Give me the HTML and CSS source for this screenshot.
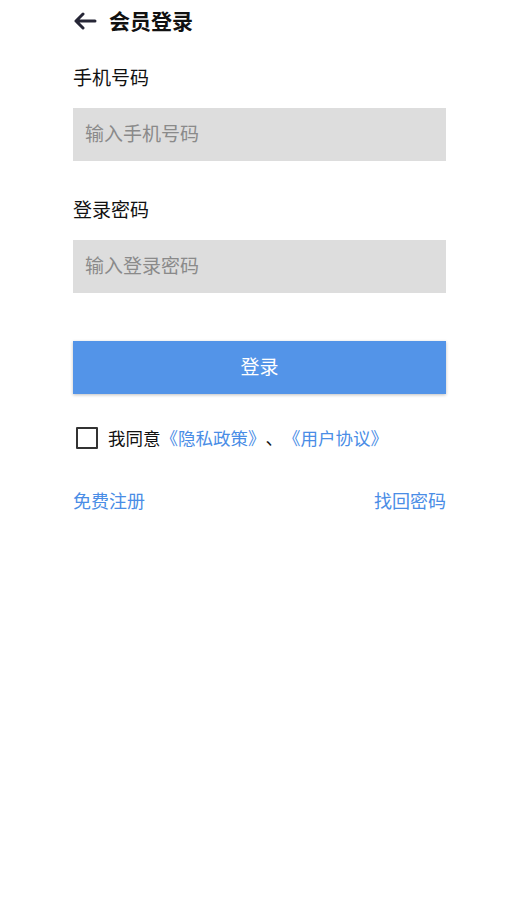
FILE: index.html
```html
<!DOCTYPE html>
<html lang="zh-CN">
  <head>
    <meta charset="UTF-8" />
    <meta name="viewport" content="width=device-width, initial-scale=1.0" />
    <title>会员登录</title>
    <link rel="stylesheet" href="styles.css">
  </head>
  <body>
    <div class="page">
      <div class="header">
        <svg class="back" width="24" height="18" viewBox="0 0 24 18">
          <path d="M22 9H3M10 2L3 9l7 7" fill="none" stroke="#262636" stroke-width="3" stroke-linecap="round" stroke-linejoin="round" />
        </svg>
        <h1>会员登录</h1>
      </div>

      <div class="field">
        <label>手机号码</label>
        <input type="text" placeholder="输入手机号码" />
      </div>
      <div class="field">
        <label>登录密码</label>
        <input type="password" placeholder="输入登录密码" />
      </div>

      <button class="btn-login">登录</button>

      <div class="agree">
        <span class="checkbox"></span>
        <span>我同意<a href="#">《隐私政策》</a>、<a href="#">《用户协议》</a></span>
      </div>

      <div class="links">
        <a href="#">免费注册</a>
        <a href="#">找回密码</a>
      </div>
    </div>
  </body>
</html>
```

FILE: styles.css
```css
body {
  margin: 0;
  font-family: "Noto Sans CJK SC", "Noto Sans", sans-serif;
  color: #111;
  background: #fff;
  text-spacing-trim: space-all;
}

.page {
  width: 373px;
  margin-left: 73px;
}

.header {
  display: flex;
  align-items: center;
  height: 40px;
  gap: 12px;
}

.back {
  display: block;
  margin-top: 1px;
}

h1 {
  margin: 0;
  font-size: 21px;
  font-weight: bold;
}

.field {
  display: flex;
  flex-direction: column;
}

.field label {
  font-size: 19px;
  line-height: 28px;
  margin-top: 23px;
  margin-bottom: 17px;
}

.field + .field label {
  margin-top: 34px;
}

.field input {
  height: 53px;
  border: none;
  outline: none;
  background: #dddddd;
  padding: 0 12px 4px;
  font-size: 19px;
  font-family: inherit;
  box-sizing: border-box;
}

.field input::placeholder {
  color: #8a8a8a;
}

.btn-login {
  display: block;
  width: 100%;
  height: 53px;
  margin-top: 48px;
  padding: 0 0 4px;
  border: none;
  background: #5394e8;
  color: #fff;
  font-size: 19px;
  font-family: inherit;
  box-shadow: 0 1px 3px rgba(0, 0, 0, 0.25);
}

.agree {
  display: flex;
  align-items: center;
  margin-top: 31px;
  padding-left: 3px;
  font-size: 17.5px;
  gap: 10px;
}

.checkbox {
  width: 18px;
  height: 18px;
  border: 2px solid #333;
  border-radius: 1px;
}

a {
  color: #4a8de6;
  text-decoration: none;
}

.links {
  display: flex;
  justify-content: space-between;
  margin-top: 37px;
  font-size: 18px;
}
```
